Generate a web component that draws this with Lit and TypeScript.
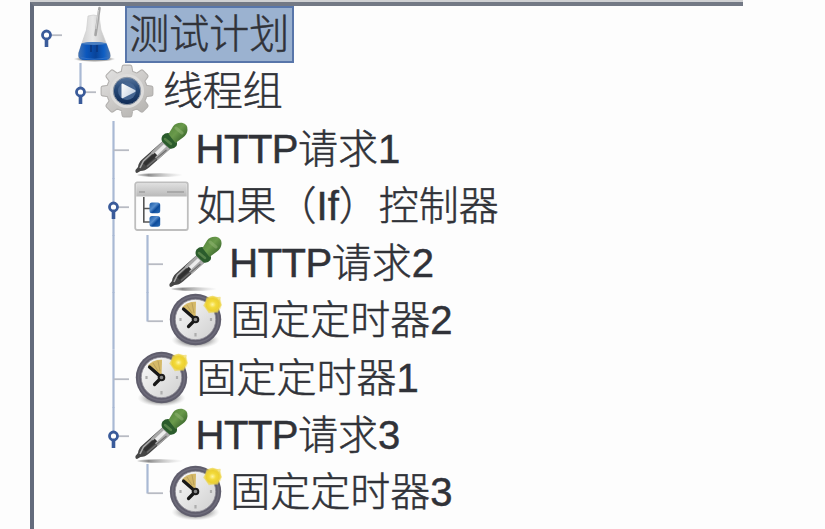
import { LitElement, html, svg, css } from "lit";
import { customElement, property } from "lit/decorators.js";

type Icon = "flask" | "gear" | "dropper" | "controller" | "timer";
type Guide = "none" | "line" | "tee" | "elbow" | "stub";

interface Row {
  label: string;
  icon: Icon;
  /** One entry per indentation level, the last one touches the icon. */
  guides: Guide[];
  handle?: boolean;
  selected?: boolean;
}

const ROWS: Row[] = [
  { label: "测试计划", icon: "flask", guides: ["stub"], handle: true, selected: true },
  { label: "线程组", icon: "gear", guides: ["none", "elbow"], handle: true },
  { label: "HTTP请求1", icon: "dropper", guides: ["none", "none", "tee"] },
  { label: "如果（If）控制器", icon: "controller", guides: ["none", "none", "tee"], handle: true },
  { label: "HTTP请求2", icon: "dropper", guides: ["none", "none", "line", "tee"] },
  { label: "固定定时器2", icon: "timer", guides: ["none", "none", "line", "elbow"] },
  { label: "固定定时器1", icon: "timer", guides: ["none", "none", "tee"] },
  { label: "HTTP请求3", icon: "dropper", guides: ["none", "none", "elbow"], handle: true },
  { label: "固定定时器3", icon: "timer", guides: ["none", "none", "none", "elbow"] },
];

const gearPath = (() => {
  const pts: string[] = [];
  const teeth = 8;
  for (let i = 0; i < teeth; i++) {
    const mid = (i * 2 * Math.PI) / teeth - Math.PI / 2;
    for (const [off, r] of [[-0.22, 19], [-0.13, 24.4], [0.13, 24.4], [0.22, 19]]) {
      pts.push(`${(26 + r * Math.cos(mid + off)).toFixed(2)} ${(27 + r * Math.sin(mid + off)).toFixed(2)}`);
    }
  }
  return `M${pts.join("L")}Z`;
})();

const ICONS: Record<Icon, unknown> = {
  flask: svg`
    <defs>
      <linearGradient id="glass"><stop offset="0" stop-color="#c9c9c9"/><stop offset=".45" stop-color="#e9e9e9"/><stop offset="1" stop-color="#b5b5b5"/></linearGradient>
      <linearGradient id="liquid"><stop offset="0" stop-color="#4474b4"/><stop offset=".25" stop-color="#0b57bd"/><stop offset=".55" stop-color="#084399"/><stop offset=".8" stop-color="#0f5fc4"/><stop offset="1" stop-color="#4a78b4"/></linearGradient>
      <radialGradient id="fs"><stop offset="0" stop-color="#444"/><stop offset=".7" stop-color="#888" stop-opacity=".8"/><stop offset="1" stop-color="#bbb" stop-opacity="0"/></radialGradient>
    </defs>
    <ellipse cx="26.500" cy="52" rx="21" ry="3" fill="url(#fs)"/>
    <path d="M20 9Q25.500 7 31 9L33 23L42 46Q43.500 52.500 38.500 53H14.500Q9.500 52.500 10.500 46L18.500 23Z" fill="url(#glass)" stroke="#cfcfcf" stroke-width=".7"/>
    <path d="M13.500 36.500Q26 34 38.500 36.500L42 46Q43.500 52.500 38.500 53H14.500Q9.500 52.500 10.500 46Z" fill="url(#liquid)"/>
    <ellipse cx="26" cy="36.500" rx="12.300" ry="1.500" fill="#4a7fc2"/>
    <path d="M13 50.500Q26 54 40 50.500" fill="none" stroke="#2f70c8" stroke-width="1.200"/>
    <path d="M31.500 1L27.500 28" stroke="#a6a6a6" stroke-width="2.600" stroke-linecap="round"/>
    <path d="M30.500 3L28 22" stroke="#dadada" stroke-width=".8"/>
    <path d="M23 38V45M29 38V45" stroke="#0a357c" stroke-width="1.500"/>`,
  gear: svg`
    <defs>
      <linearGradient id="metal" x2=".7" y2="1"><stop offset="0" stop-color="#e4e4e4"/><stop offset=".5" stop-color="#cfcdcb"/><stop offset="1" stop-color="#b9b7b4"/></linearGradient>
      <linearGradient id="navy" x2="0" y2="1"><stop offset="0" stop-color="#56749c"/><stop offset=".4" stop-color="#284a78"/><stop offset="1" stop-color="#0f2a55"/></linearGradient>
      <linearGradient id="play" x2="1" y2=".6"><stop offset="0" stop-color="#fff"/><stop offset="1" stop-color="#c4d1e1"/></linearGradient>
    </defs>
    <path d=${gearPath} fill="#b3b1af" stroke="#b3b1af" stroke-width="4.500" stroke-linejoin="round"/>
    <path d=${gearPath} fill="url(#metal)" stroke="url(#metal)" stroke-width="2.300" stroke-linejoin="round"/>
    <circle cx="26" cy="27" r="17" fill="#dddcdb"/>
    <circle cx="26" cy="27" r="13.700" fill="url(#navy)" stroke="#8e98a6" stroke-width="1"/>
    <circle cx="26" cy="27" r="9" fill="#456591"/>
    <path d="M20.500 20.500Q20.500 19 22 19.700L34 26Q35.500 27 34 28L22.200 34Q20.500 34.700 20.500 33Z" fill="url(#play)"/>`,
  dropper: svg`
    <defs>
      <linearGradient id="bulb" x2="1" y2="1"><stop offset="0" stop-color="#4f8038"/><stop offset=".45" stop-color="#6a9a4b"/><stop offset="1" stop-color="#244f1e"/></linearGradient>
      <linearGradient id="ds"><stop offset="0" stop-color="#888" stop-opacity=".2"/><stop offset=".25" stop-color="#8c8c8c"/><stop offset="1" stop-color="#bbb" stop-opacity="0"/></linearGradient>
    </defs>
    <ellipse cx="25" cy="53" rx="23" ry="1.800" fill="url(#ds)"/>
    <path d="M27.800 19L35.500 26.500L14 45.500Q10 49 5.500 49L2 51Q0 51 .5 48L3 45Q3.500 40.500 7 37.500Z" fill="#464646"/>
    <path d="M27.800 19L35.500 26.500L22.500 38L16 30.500Z" fill="#aaa"/>
    <path d="M27 22L8.500 39L5 46" fill="none" stroke="#a8a8a8" stroke-width="1.600"/>
    <path d="M30 23.500L19.500 33.500" stroke="#ececec" stroke-width="3.500"/>
    <path d="M31.500 28L12 44.500" stroke="#707070" stroke-width="1.200"/>
    <path d="M21 32L9.500 42.500" stroke="#303030" stroke-width="3.600"/>
    <path d="M27.500 13.500Q25.500 17 27.500 20L34.500 26.500Q38.500 27.500 41.500 24Q43 20.500 40.500 18.500L35.500 11.500Q31 10 27.500 13.500Z" fill="#2b5c2c"/>
    <path d="M33.500 12L38 4.500Q41 .3 47 .8Q53 2 52.500 8Q52 13 48 15.500L40.500 21Z" fill="url(#bulb)"/>
    <path d="M30 17L36 22" stroke="#568249" stroke-width="2.500" stroke-linecap="round"/>
    <path d="M41 6L47 11" stroke="#9abc7c" stroke-width="3" stroke-linecap="round" opacity=".45"/>`,
  controller: svg`
    <defs>
      <linearGradient id="bar" x2="0" y2="1"><stop offset="0" stop-color="#dedede"/><stop offset="1" stop-color="#b9b9b9"/></linearGradient>
      <linearGradient id="node" x2="1" y2="1"><stop offset="0" stop-color="#1557a6"/><stop offset=".4" stop-color="#568dcc"/><stop offset=".6" stop-color="#0d4b9b"/><stop offset="1" stop-color="#2d70b8"/></linearGradient>
    </defs>
    <rect x=".2" y="3.500" width="52.600" height="47.500" rx="2" fill="#fdfdfd" stroke="#bebebe" stroke-width="1.800"/>
    <path d="M1.200 5.500Q1.200 4.500 2.500 4.500H50.500Q51.800 4.500 51.800 5.500V17.500H1.200Z" fill="url(#bar)"/>
    <path d="M4 13H10M32 13H49" stroke="#a0a0a0" stroke-width="1.500"/>
    <path d="M8.800 18V43H15M8.800 29.500H15" fill="none" stroke="#555" stroke-width="1.600"/>
    <rect x="14.500" y="23.500" width="10.700" height="10.700" rx="2.500" fill="url(#node)"/>
    <rect x="14.500" y="37" width="10.700" height="10.700" rx="2.500" fill="url(#node)"/>`,
  timer: svg`
    <defs>
      <radialGradient id="ts"><stop offset=".5" stop-color="#777"/><stop offset="1" stop-color="#bbb" stop-opacity="0"/></radialGradient>
      <linearGradient id="face" x2="1" y2="1"><stop offset="0" stop-color="#fbfbfb"/><stop offset="1" stop-color="#cfcfcf"/></linearGradient>
      <radialGradient id="star"><stop offset="0" stop-color="#fff5a0"/><stop offset=".4" stop-color="#f3db3c"/><stop offset=".75" stop-color="#ecd030" stop-opacity=".95"/><stop offset="1" stop-color="#f0dc60" stop-opacity=".15"/></radialGradient>
    </defs>
    <ellipse cx="26.500" cy="47" rx="24" ry="8.500" fill="url(#ts)" opacity=".8"/>
    <circle cx="26.500" cy="26.500" r="25.700" fill="#5f5d6c"/>
    <circle cx="26.500" cy="26.500" r="23" fill="none" stroke="#6e6c7b" stroke-width="1.500"/>
    <circle cx="26.500" cy="26.500" r="20.200" fill="url(#face)" stroke="#8e8c96" stroke-width=".8"/>
    <path d="M26.500 26.500L13 14.500Q18 8.500 27 8.800Z" fill="#d5b968"/>
    <path d="M18 12L23 20M23 10L25 20" stroke="#b39a58" stroke-width=".8"/>
    <path d="M11.500 25V28M42 25V28M26.500 40V43.500" stroke="#adadad" stroke-width="2.200"/>
    <path d="M14.500 16L26.500 26.500L19.500 33.500" fill="none" stroke="#171717" stroke-width="3.200" stroke-linecap="round" stroke-linejoin="round"/>
    <circle cx="26.500" cy="26.500" r="2.800" fill="#888" stroke="#1b1b1b" stroke-width="2"/>
    <circle cx="44" cy="11.500" r="9" fill="url(#star)"/>
    <path d="M43.500 3.500L46.500 5L51 4.500L50.500 9L52 12L49 15L48.500 19L44 18L40 19.500L38 15.500L35 12.500L37.500 9L38 5Z" fill="url(#star)" stroke="#ecd342" stroke-opacity=".55" stroke-width="1.500" stroke-linejoin="round"/>`,
};

@customElement("tree-guide")
export class TreeGuide extends LitElement {
  @property() kind: Guide = "none";
  @property({ type: Boolean }) handle = false;

  static styles = css`
    :host { display: block; flex: none; width: 33.7px; height: 57.25px; }
    svg { display: block; width: 100%; height: 100%; overflow: visible; }
    .trunk { stroke: #a9b9d4; stroke-width: 2.2; }
    .branch { stroke: #b8bbc3; stroke-width: 1.8; }
    .knob { fill: #fff; stroke: #3a5b9a; stroke-width: 2.8; }
    .stem { stroke: #3a5b9a; stroke-width: 3.6; }
  `;

  render() {
    const k = this.kind;
    const trunk = k === "line" || k === "tee" || k === "elbow";
    return html`<svg viewBox="0 0 33.7 57.25">
      ${trunk ? svg`<path class="trunk" d=${k === "elbow" ? "M12.500 0V29.500" : "M12.500 0V57.800"}/>` : null}
      ${k !== "none" && k !== "line" ? svg`<path class="branch" d="M12.500 29.200H28"/>` : null}
      ${this.handle ? svg`<path class="stem" d="M12.500 32V41"/><circle class="knob" cx="12.500" cy="29" r="4"/>` : null}
    </svg>`;
  }
}

@customElement("tree-icon")
export class TreeIcon extends LitElement {
  @property() name: Icon = "flask";

  static styles = css`
    :host { display: block; flex: none; width: 53px; height: 55px; }
    svg { display: block; overflow: visible; }
  `;

  render() {
    return html`<svg width="53" height="55" viewBox="0 0 53 55">${ICONS[this.name]}</svg>`;
  }
}

@customElement("app-root")
export class AppRoot extends LitElement {
  static styles = css`
    :host { display: block; height: 529px; overflow: hidden; background: #fdfdfd; }
    .panel {
      box-sizing: border-box;
      width: 713px;
      height: 529px;
      margin-left: 30px;
      border-top: 2px solid #d0d1d3;
    }
    .tree {
      box-sizing: border-box;
      height: 527px;
      border-top: 4px solid #737985;
      border-left: 4px solid #636b7c;
    }
    .row { display: flex; align-items: center; height: 57.25px; }
    .label {
      box-sizing: border-box;
      height: 57px;
      margin-left: 4.500px;
      padding: 2px 3px 0 2px;
      border: 2px solid transparent;
      font: 300 40px/49px "Liberation Sans", "Noto Sans CJK SC", sans-serif;
      color: #303238;
      -webkit-text-stroke: 0.5px #303238;
      white-space: nowrap;
    }
    .latin { letter-spacing: -0.5px; margin-left: -1px; }
    .selected { background: #9bb2d0; border-color: #5876aa; }
  `;

  private text(label: string) {
    return label.startsWith("HTTP") ? html`<span class="latin">HTTP</span>${label.slice(4)}` : label;
  }

  render() {
    return html`<div class="panel"><div class="tree" role="tree">
      ${ROWS.map(
        (r) => html`<div class="row" role="treeitem">
          ${r.guides.map(
            (g, i) => html`<tree-guide .kind=${g} .handle=${!!r.handle && i === r.guides.length - 1}></tree-guide>`,
          )}
          <tree-icon .name=${r.icon}></tree-icon>
          <span class="label ${r.selected ? "selected" : ""}">${this.text(r.label)}</span>
        </div>`,
      )}
    </div></div>`;
  }
}
